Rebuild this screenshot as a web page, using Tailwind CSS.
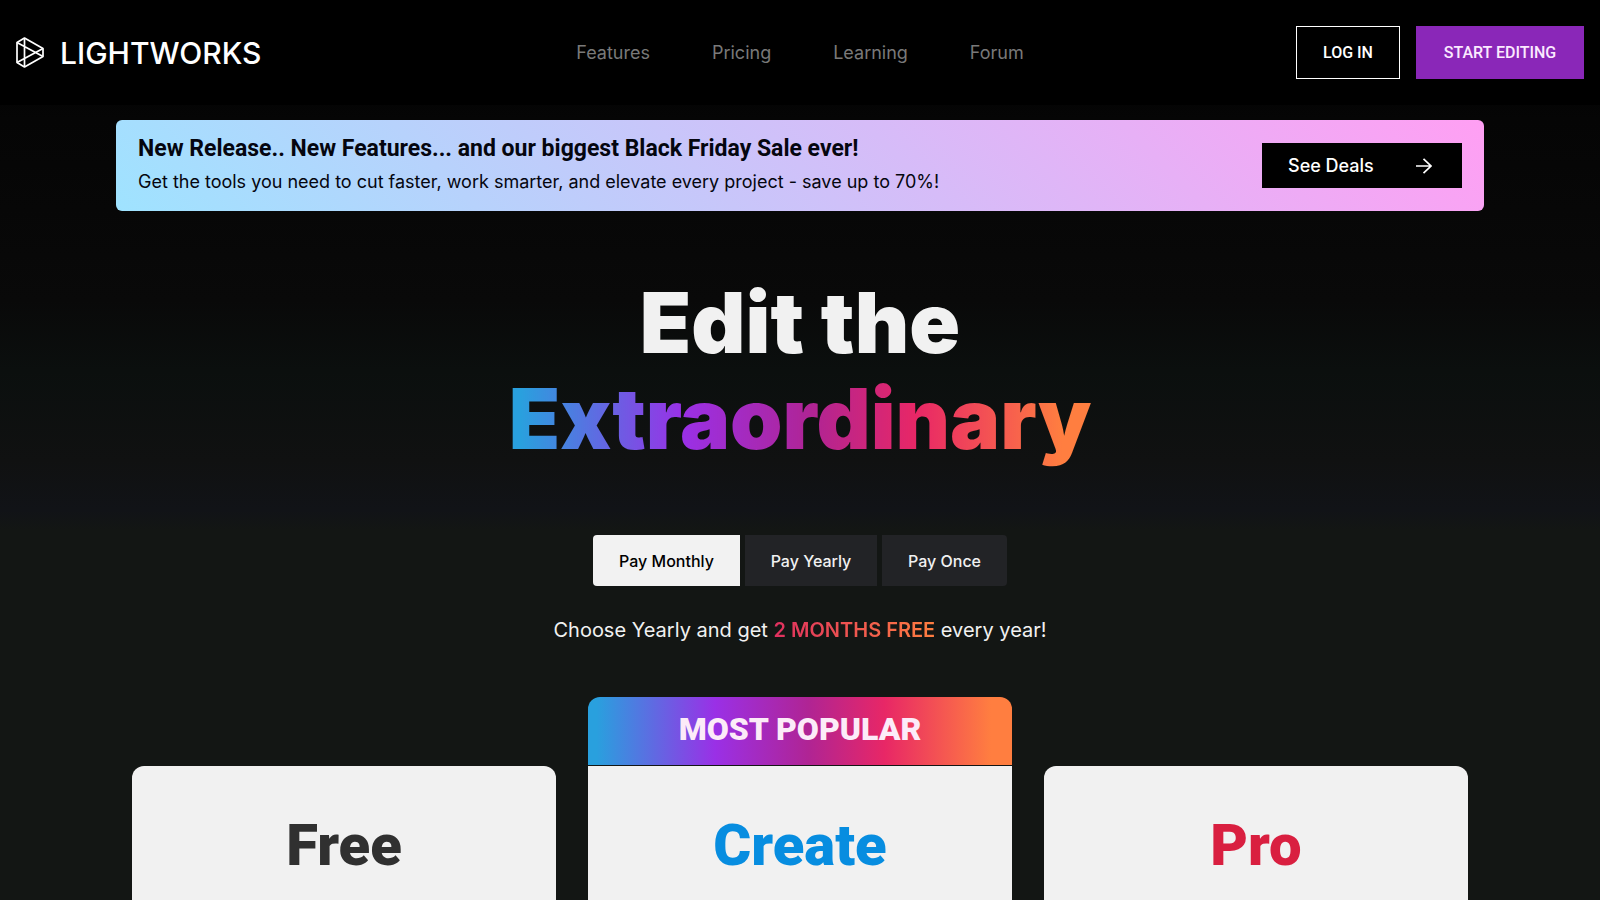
<!DOCTYPE html>
<html lang="en">

<head>
  <meta charset="UTF-8" />
  <meta name="viewport" content="width=device-width, initial-scale=1.0" />
  <title>Lightworks - Pricing</title>
  <script src="https://cdn.jsdelivr.net/npm/@tailwindcss/browser@4"></script>
</head>

<body class="min-h-screen overflow-x-hidden bg-[#131614] font-['Inter',sans-serif] text-[#f1f1f1]">
  <div class="bg-[linear-gradient(180deg,#000_0px,#050505_120px,#090909_300px,#0b0f0e_370px,#101111_460px,#111317_510px,#131614_530px)]">
    <!-- Header -->
    <header class="flex items-center px-4 py-[26px] bg-black">
      <div class="flex flex-1">
        <a href="#" class="flex items-center gap-4 text-white">
          <svg class="w-7 h-[31px]" viewBox="0 0 28 31" fill="none" stroke="currentColor" stroke-width="1.7" stroke-linejoin="round">
            <path d="M8.500 1 27 11.500v8L8.500 30 1 25.500v-20z" />
            <path d="M8.500 1v29M1 5.500l26 14M1 25.500l26-14" />
          </svg>
          <span class="text-[30px] leading-8 font-medium">LIGHTWORKS</span>
        </a>
      </div>
      <nav class="flex gap-[62px] text-lg text-[#797979]">
        <a href="#">Features</a>
        <a href="#">Pricing</a>
        <a href="#">Learning</a>
        <a href="#">Forum</a>
      </nav>
      <div class="flex justify-end flex-1 gap-4 font-['Roboto',sans-serif] font-medium">
        <button type="button" class="w-[104px] h-[53px] border border-white text-white">LOG IN</button>
        <button type="button" class="w-[168px] h-[53px] bg-[#8a27b8] text-[#fbeaff]">START EDITING</button>
      </div>
    </header>

    <main class="max-w-[1368px] mx-auto pt-[15px]">
      <!-- Sale banner -->
      <section class="flex items-center justify-between px-[22px] py-[13px] rounded-md text-[#05060f] bg-[linear-gradient(45deg,#9fe3ff,#ff9ff3)]">
        <div>
          <h2 class="text-[23px] leading-8 font-bold font-['Roboto',sans-serif]">New Release.. New Features... and our biggest Black Friday Sale ever!</h2>
          <p class="mt-px text-lg leading-8">Get the tools you need to cut faster, work smarter, and elevate every project - save up to 70%!</p>
        </div>
        <a href="#" class="flex items-center justify-between w-[200px] h-[45px] pl-[26px] pr-[30px] text-lg font-medium text-white bg-black">
          See Deals
          <svg class="w-4 h-4" viewBox="0 0 16 16" fill="none" stroke="currentColor" stroke-width="1.7">
            <path d="M0 8h15M7.500 .8 15 8l-7.500 7.200" />
          </svg>
        </a>
      </section>

      <!-- Hero title -->
      <h1 class="mt-[64px] text-[84px] leading-[96px] font-black text-center">
        Edit the<br />
        <span class="inline-block text-transparent bg-clip-text bg-[linear-gradient(90deg,#29a0de_2%,#9a30e6_30%,#b02494_52%,#e82766_70%,#ff7e40_95%)]">Extraordinary</span>
      </h1>

      <!-- Billing switch -->
      <div class="flex justify-center gap-[5px] mt-[68px] font-medium">
        <button type="button" class="w-[147px] h-[51px] rounded-l bg-[#f2f2f2] text-black">Pay Monthly</button>
        <button type="button" class="w-[132px] h-[51px] bg-[#222326]">Pay Yearly</button>
        <button type="button" class="w-[125px] h-[51px] rounded-r bg-[#222326]">Pay Once</button>
      </div>
      <p class="mt-7 text-xl leading-8 text-center">
        Choose Yearly and get
        <span class="font-semibold text-transparent bg-clip-text bg-[linear-gradient(90deg,#e0305f,#ff7e40)]">2 MONTHS FREE</span>
        every year!
      </p>

      <!-- Plans -->
      <section class="grid items-end grid-cols-3 gap-8 px-4 mt-[51px] font-['Roboto',sans-serif] font-black text-center">
        <div class="h-96 pt-11 rounded-t-xl bg-[#f1f1f1]">
          <h2 class="text-[58px] leading-[70px] text-[#303030]">Free</h2>
        </div>
        <div>
          <div class="h-[68px] mb-px rounded-t-xl text-[32px] leading-[65px] text-[#fcebf8] bg-[linear-gradient(90deg,#29a0de_2%,#9a30e6_30%,#b02494_52%,#e82766_70%,#ff7e40_95%)]">MOST POPULAR</div>
          <div class="h-96 pt-11 bg-[#f1f1f1]">
            <h2 class="text-[58px] leading-[70px] text-[#078de0]">Create</h2>
          </div>
        </div>
        <div class="h-96 pt-11 rounded-t-xl bg-[#f1f1f1]">
          <h2 class="text-[58px] leading-[70px] text-[#d91f40]">Pro</h2>
        </div>
      </section>
    </main>
  </div>
</body>

</html>
